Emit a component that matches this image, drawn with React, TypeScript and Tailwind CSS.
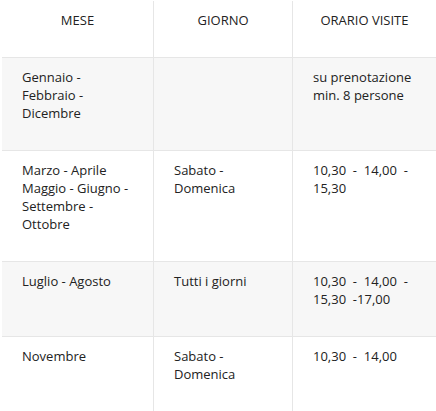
const rows = [
  {
    mese: 'Gennaio - Febbraio - Dicembre',
    giorno: '',
    orario: 'su prenotazione min. 8 persone',
    striped: true,
  },
  {
    mese: 'Marzo - Aprile Maggio - Giugno - Settembre - Ottobre',
    giorno: 'Sabato - Domenica',
    orario: '10,30  -  14,00  - 15,30',
    striped: false,
  },
  {
    mese: 'Luglio - Agosto',
    giorno: 'Tutti i giorni',
    orario: '10,30  -  14,00  - 15,30  -17,00',
    striped: true,
  },
  {
    mese: 'Novembre',
    giorno: 'Sabato - Domenica',
    orario: '10,30  -  14,00',
    striped: false,
  },
];

const cell = 'pt-[10px] pb-[28px] px-5 whitespace-pre-wrap';

export default function App() {
  return (
    <div
      className="min-h-screen bg-white pl-[2px] pt-px text-[13px] leading-[18px] text-[#222]"
      style={{ fontFamily: '"Open Sans", sans-serif' }}
    >
      <div className="grid w-[434px] grid-cols-[151px_139px_144px]">
        <div className={`${cell} text-center`}>MESE</div>
        <div className={`${cell} border-l border-[#e6e6e6] text-center`}>GIORNO</div>
        <div className={`${cell} border-l border-[#e6e6e6] text-center`}>ORARIO VISITE</div>

        {rows.map((r) => (
          <div key={r.mese} className="contents">
            <div className={`${cell} border-t border-[#e6e6e6] ${r.striped ? 'bg-[#f7f7f7]' : ''}`}>{r.mese}</div>
            <div className={`${cell} border-t border-l border-[#e6e6e6] ${r.striped ? 'bg-[#f7f7f7]' : ''}`}>{r.giorno}</div>
            <div className={`${cell} border-t border-l border-[#e6e6e6] ${r.striped ? 'bg-[#f7f7f7]' : ''}`}>{r.orario}</div>
          </div>
        ))}
      </div>
    </div>
  );
}
